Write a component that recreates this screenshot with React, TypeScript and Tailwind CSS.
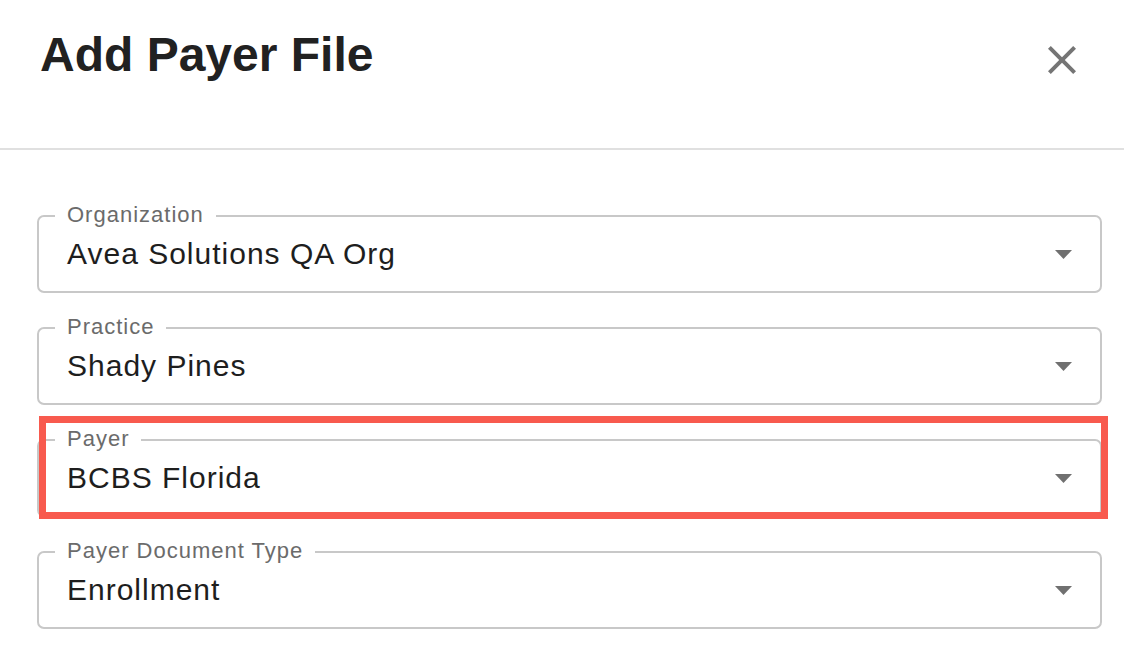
import React from 'react';

const fields = [
  { label: 'Organization', value: 'Avea Solutions QA Org' },
  { label: 'Practice', value: 'Shady Pines' },
  { label: 'Payer', value: 'BCBS Florida', highlight: true },
  { label: 'Payer Document Type', value: 'Enrollment' },
];

const SelectField = ({ label, value, highlight }: { label: string; value: string; highlight?: boolean }) => {
  return (
    <div className="relative h-[78px] rounded-[7px] border-2 border-[#c8c8c8] flex items-center pl-[28px] pr-[28px]">
      <span className="absolute top-[-2px] left-[16px] -translate-y-1/2 bg-white px-[12px] text-[22px] leading-none tracking-[1px] text-[#6b6b6b]">
        {label}
      </span>
      <span className="flex-1 text-[30px] leading-none tracking-[1px] text-[#1e1e1e]">{value}</span>
      <svg width="17" height="9" viewBox="0 0 17 9" className="text-[#707070]">
        <path d="M0 0 L17 0 L8.5 9 Z" fill="currentColor" />
      </svg>

      {/* annotation box */}
      {highlight && (
        <div className="absolute -top-[25px] left-[0px] -right-[8px] -bottom-[4px] border-[7px] border-[#f85a4e] pointer-events-none"></div>
      )}
    </div>
  );
};

const App = () => {
  return (
    <div className="w-[1124px] h-[648px] bg-white overflow-hidden" style={{ fontFamily: '"Liberation Sans", Arial, sans-serif' }}>
      <div className="h-[150px] border-b-2 border-[#e0e0e0] flex justify-between items-start pl-[40px] pr-[38px] pt-[31px]">
        <h1 className="text-[48px] leading-[48px] font-bold text-[#212121]">
          Add Payer File
        </h1>
        <svg width="48" height="48" viewBox="0 0 24 24" className="mt-[5px] text-[#757575]">
          <path fill="currentColor" d="M19 6.41 17.59 5 12 10.59 6.41 5 5 6.41 10.59 12 5 17.59 6.41 19 12 13.41 17.59 19 19 17.59 13.41 12z" />
        </svg>
      </div>

      <div className="pt-[65px] pl-[37px] pr-[22px] flex flex-col gap-[34px]">
        {fields.map((f) => (
          <SelectField key={f.label} label={f.label} value={f.value} highlight={f.highlight} />
        ))}
      </div>
    </div>
  );
};

export default App;
